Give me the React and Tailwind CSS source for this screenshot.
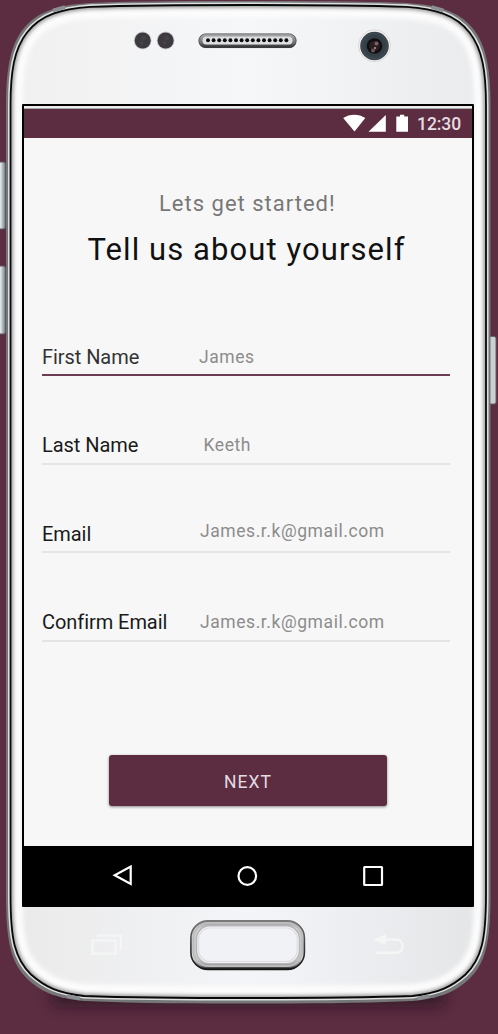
import React from "react";

const OUTER =
  "M6 105C6 70 10 45 24 28C38 11 59 5 90 3C140 1 200 1 248 1C296 1 356 1 406.500 3C437.500 5 458.500 11 472.500 28C486.500 45 490.500 70 490.500 105V895C490.500 942 485.500 963 469.500 978.500C455.500 992 441.500 998 412.500 1001C356 1003.500 296 1003.500 248 1003.500C200 1003.500 140 1003.500 84 1001C55 998 41 992 27 978.500C11 963 6 942 6 895Z";
const INNER =
  "M10.500 105C10.500 72 14 49 27 32.500C41 14 62 9 90 6.800C140 5 200 5 248 5C296 5 356 5 406.500 6.800C434.500 9 455.500 14 469.500 32.500C482.500 49 486 72 486 105V895C486 940 481.500 959 465.500 974.500C451.500 987 438.500 993 412.500 996C356 998 296 998 248 998C200 998 140 998 84 996C58 993 45 987 31 974.500C15 959 10.500 940 10.500 895Z";

const HOLES = Array.from({ length: 15 }, (_, i) => 208 + i * 5.6);

function PhoneBody() {
  return (
    <svg className="absolute inset-0" width="498" height="1034" viewBox="0 0 498 1034" aria-hidden="true">
      <defs>
        <linearGradient id="face" x1="0" y1="0" x2="1" y2="0">
          <stop offset="0" stopColor="#f0f0f0" />
          <stop offset="0.5" stopColor="#f6f7f9" />
          <stop offset="1" stopColor="#eaebed" />
        </linearGradient>
        <linearGradient id="chin" x1="0" y1="0" x2="1" y2="0">
          <stop offset="0" stopColor="#e9e9e9" />
          <stop offset="0.5" stopColor="#f4f5f8" />
          <stop offset="1" stopColor="#e3e4e6" />
        </linearGradient>
        <linearGradient id="key" x1="0" y1="0" x2="1" y2="0">
          <stop offset="0" stopColor="#c9d0d5" />
          <stop offset="0.5" stopColor="#dde3e6" />
          <stop offset="1" stopColor="#6e767b" />
        </linearGradient>
        <linearGradient id="home" x1="0" y1="0" x2="0" y2="1">
          <stop offset="0" stopColor="#8a8a8b" />
          <stop offset="0.15" stopColor="#d2d2d3" />
          <stop offset="0.8" stopColor="#d0d0d1" />
          <stop offset="0.92" stopColor="#858585" />
          <stop offset="1" stopColor="#111" />
        </linearGradient>
        <linearGradient id="homeEdge" x1="0" y1="0" x2="0" y2="1">
          <stop offset="0" stopColor="#777" />
          <stop offset="0.5" stopColor="#3c3c3c" />
          <stop offset="1" stopColor="#151515" />
        </linearGradient>
        <linearGradient id="grille" x1="0" y1="0" x2="0" y2="1">
          <stop offset="0" stopColor="#b0b1b2" />
          <stop offset="0.6" stopColor="#777" />
          <stop offset="1" stopColor="#252525" />
        </linearGradient>
        <filter id="soft" x="-10%" y="-10%" width="120%" height="120%">
          <feGaussianBlur stdDeviation="2" />
        </filter>
        <filter id="wide" x="-20%" y="-60%" width="140%" height="220%">
          <feGaussianBlur stdDeviation="7" />
        </filter>
        <clipPath id="inside">
          <path d={INNER} />
        </clipPath>
      </defs>

      <rect x="50" y="985" width="397" height="22" rx="11" fill="#23101a" opacity="0.6" filter="url(#wide)" />

      <rect x="-4" y="162" width="9.500" height="67" rx="2" fill="url(#key)" stroke="#555b60" />
      <rect x="-4" y="266" width="9.500" height="68" rx="2" fill="url(#key)" stroke="#555b60" />
      <rect x="489" y="336.500" width="7" height="67.500" rx="2" fill="#cdd0d2" stroke="#62666a" />

      <path d={OUTER} fill="#747677" />
      <path d={INNER} fill="none" stroke="#dedede" strokeWidth="5" />
      <path d={INNER} fill="url(#face)" />
      <g clipPath="url(#inside)">
        <rect y="906" width="498" height="110" fill="url(#chin)" />
        <path d={INNER} fill="none" stroke="#fcfcfc" strokeWidth="24" filter="url(#soft)" />
        <path d={INNER} fill="none" stroke="#77777a" strokeWidth="4" filter="url(#soft)" />
      </g>
      <path d={INNER} fill="none" stroke="#080808" strokeWidth="1.800" />
      <path d="M53 10.500L65 7M443.500 10.500L431.500 7M67 996L80 998.500M429.500 996L417.500 998.500" stroke="#8b8f94" strokeWidth="3.500" />

      {[142.7, 165.6].map((x) => (
        <g key={x}>
          <circle cx={x} cy="40.500" r="8.900" fill="#c8c6cb" />
          <circle cx={x} cy="40.500" r="8" fill="#3d3a3f" />
          <circle cx={x + 1} cy="38" r="2.500" fill="#464147" />
          <circle cx={x - 1} cy="43" r="2" fill="#464147" />
        </g>
      ))}

      <rect x="198.500" y="33.500" width="98" height="14.500" rx="7.200" fill="url(#grille)" />
      <rect x="198.900" y="33.900" width="97.200" height="13.700" rx="6.800" fill="none" stroke="#444" strokeOpacity="0.6" />
      <rect x="202.500" y="36.500" width="90" height="8" rx="4" fill="#dedfe1" />
      {HOLES.map((x) => (
        <circle key={x} cx={x} cy="40.300" r="1.950" fill="#0d0d0f" />
      ))}

      <circle cx="374.500" cy="45.700" r="16" fill="#f6f3f3" stroke="#d6d3d4" strokeWidth="0.900" />
      <circle cx="374.500" cy="46" r="14.300" fill="#3b464d" />
      <circle cx="374.500" cy="46" r="11" fill="#334047" />
      <circle cx="374.500" cy="46" r="7.800" fill="#110e11" />
      <circle cx="374.500" cy="46" r="5.300" fill="#2b1d22" />
      <circle cx="376.500" cy="43.500" r="2" fill="#796065" />
      <circle cx="373" cy="50.500" r="1.900" fill="#6b5258" />
      <circle cx="375" cy="48" r="0.800" fill="#fff" />

      <rect x="190.900" y="920.900" width="113.500" height="48.500" rx="17" fill="url(#home)" stroke="url(#homeEdge)" strokeWidth="1.600" />
      <rect x="193.500" y="923" width="108.500" height="43" rx="15" fill="none" stroke="#bcbcbd" strokeWidth="2" />
      <rect x="196.500" y="925.800" width="103" height="38" rx="13" fill="#f1f2f6" stroke="#b6b6b8" strokeWidth="1.500" />
      <rect x="198.700" y="928" width="98.600" height="33.500" rx="11" fill="none" stroke="#dfdfe3" strokeWidth="1.200" />

      <g fill="none" stroke="#f4f5f5" strokeWidth="2.500">
        <path d="M92.500 940.500H115.500V953.800H92.500ZM97 935.500H120.800V950" />
        <path d="M382 939.500H396.500C404.500 939.500 404.500 952.700 396.500 952.700H376" />
      </g>
      <path d="M373 939.800L386 934V945Z" fill="#f4f5f5" />
    </svg>
  );
}

function StatusBar() {
  return (
    <div className="flex h-[29px] items-center justify-end bg-[#5c2d41] pr-[11px]">
      <svg width="76" height="29" viewBox="0 0 76 29" fill="#fff" aria-hidden="true">
        <path d="M4.200 9C10.500 4.500 20 4.500 26.300 9L15.500 22.500Z" />
        <path d="M46.800 6V22.800H29.500Z" />
        <path d="M57.300 7.500H61V5.700H65.200V7.500H69V22.800H57.300Z" />
      </svg>
      <span className="ml-[2px] text-[17.5px] leading-[28px] font-medium tracking-[-0.1px] text-[#e6dce1]">12:30</span>
    </div>
  );
}

const FIELDS = [
  { label: "First Name", value: "James", row: "h-[31px] border-[#6d3b53]", text: "text-[#333]", val: "ml-[157px]" },
  { label: "Last Name", value: "Keeth", row: "mt-[57px] h-8 border-[#e4e4e4]", text: "text-[#1a1a1a]", val: "ml-[161.5px]" },
  { label: "Email", value: "James.r.k@gmail.com", row: "mt-[57px] h-[31px] border-[#e4e4e4]", text: "text-[#1a1a1a]", val: "ml-[158px] -mt-[3px]" },
  { label: "Confirm Email", value: "James.r.k@gmail.com", row: "mt-[57px] h-8 border-[#e4e4e4]", text: "text-[#1a1a1a]", val: "ml-[158px]" },
];

function Field({ label, value, row, text, val }) {
  return (
    <div className={"flex items-start border-b-2 " + row}>
      <span className={"w-0 text-[20px] leading-6 tracking-[-0.06px] whitespace-nowrap " + text}>{label}</span>
      <span className={"text-[17.5px] leading-6 tracking-[0.57px] text-[#8c8c8c] " + val}>{value}</span>
    </div>
  );
}

function NavBar() {
  return (
    <div className="flex h-[59px] items-center bg-black pl-[88px]">
      <svg width="284" height="28" viewBox="0 0 284 28" fill="none" stroke="#fff" strokeWidth="2.200" aria-hidden="true">
        <path d="M18.700 4.500V22L2.700 13.300Z" />
        <circle cx="135.300" cy="14" r="8.800" />
        <rect x="252.200" y="5" width="17.800" height="18" rx="0.500" />
      </svg>
    </div>
  );
}

export default function App() {
  return (
    <div className="relative h-[1034px] w-[498px] overflow-hidden bg-[#5c2d41] font-[Roboto,sans-serif]">
      <PhoneBody />
      <main className="relative mx-[22px] mt-[104px] flex h-[803px] w-[452px] flex-col rounded-[1px] border-2 border-black bg-[#f7f7f7]">
        <div className="h-[3px] border-b border-[#aaa] bg-[#ececec]" />
        <StatusBar />
        <div className="flex h-[708px] flex-col px-[18px] pt-[52px]">
          <p className="pl-[117px] text-[22px] leading-7 tracking-[1px] text-[#777]">Lets get started!</p>
          <h1 className="mt-[12px] pl-[45.5px] text-[31px] leading-10 tracking-[1.08px] whitespace-nowrap text-[#111]">
            Tell us about yourself
          </h1>
          <form className="mt-[75px] w-[408px]">
            {FIELDS.map((f) => (
              <Field key={f.label} {...f} />
            ))}
          </form>
          <button className="mt-[113px] ml-[67px] flex h-[51px] w-[278px] items-center justify-center rounded-[3px] bg-[#5c2d41] pt-[3px] text-[17.5px] tracking-[1.1px] text-[#e5dbe0] shadow-[0_1px_3px_rgba(0,0,0,0.45)]">
            NEXT
          </button>
        </div>
        <NavBar />
      </main>
    </div>
  );
}
